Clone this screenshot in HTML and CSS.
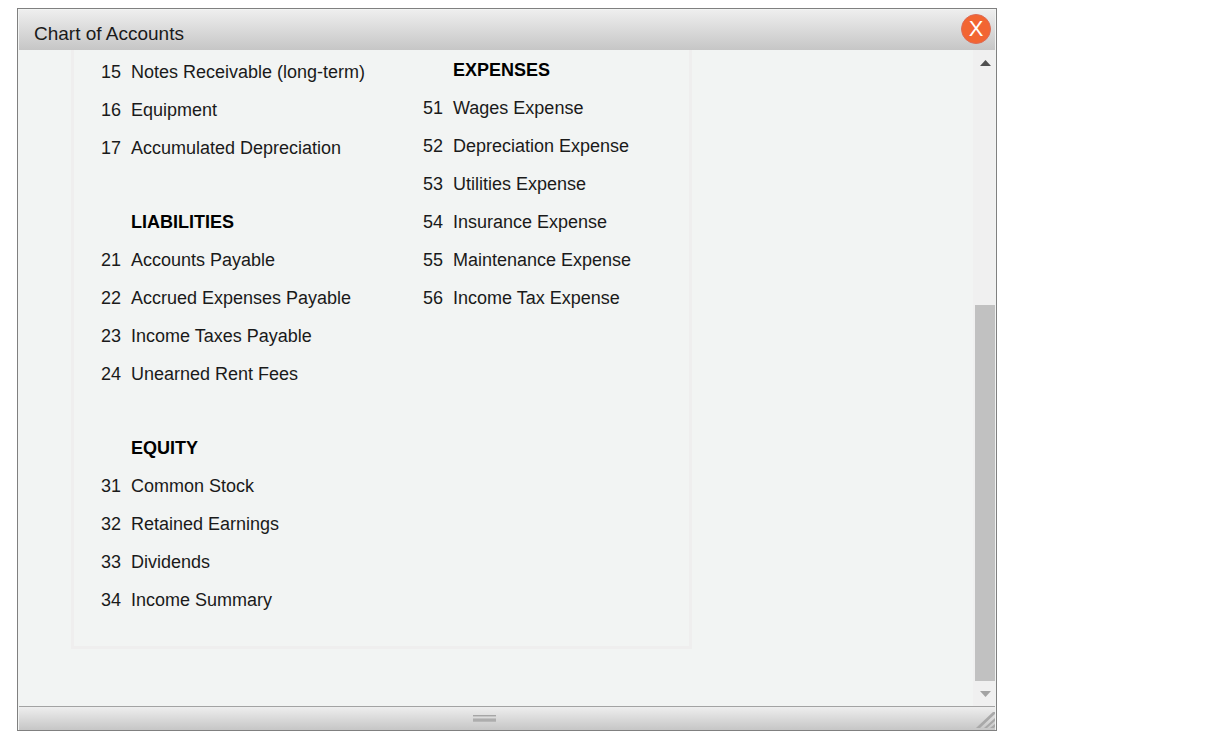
FILE: index.html
```html
<!DOCTYPE html>
<html lang="en">
<head>
    <meta charset="UTF-8">
    <meta name="viewport" content="width=device-width, initial-scale=1.0">
    <title>Chart of Accounts</title>
    <link rel="stylesheet" href="styles.css">
</head>
<body>
    <div class="window">
        <header class="title-bar">
            <h1>Chart of Accounts</h1>
            <button class="close" type="button">X</button>
        </header>

        <div class="window-body">
            <main class="content">
                <div class="panel">
                    <div class="column column-left">
                        <table>
                            <tr><td class="num">15</td><td>Notes Receivable (long-term)</td></tr>
                            <tr><td class="num">16</td><td>Equipment</td></tr>
                            <tr><td class="num">17</td><td>Accumulated Depreciation</td></tr>
                        </table>
                        <table>
                            <tr><td class="num"></td><th>LIABILITIES</th></tr>
                            <tr><td class="num">21</td><td>Accounts Payable</td></tr>
                            <tr><td class="num">22</td><td>Accrued Expenses Payable</td></tr>
                            <tr><td class="num">23</td><td>Income Taxes Payable</td></tr>
                            <tr><td class="num">24</td><td>Unearned Rent Fees</td></tr>
                        </table>
                        <table>
                            <tr><td class="num"></td><th>EQUITY</th></tr>
                            <tr><td class="num">31</td><td>Common Stock</td></tr>
                            <tr><td class="num">32</td><td>Retained Earnings</td></tr>
                            <tr><td class="num">33</td><td>Dividends</td></tr>
                            <tr><td class="num">34</td><td>Income Summary</td></tr>
                        </table>
                    </div>
                    <div class="column">
                        <table>
                            <tr><td class="num"></td><th>EXPENSES</th></tr>
                            <tr><td class="num">51</td><td>Wages Expense</td></tr>
                            <tr><td class="num">52</td><td>Depreciation Expense</td></tr>
                            <tr><td class="num">53</td><td>Utilities Expense</td></tr>
                            <tr><td class="num">54</td><td>Insurance Expense</td></tr>
                            <tr><td class="num">55</td><td>Maintenance Expense</td></tr>
                            <tr><td class="num">56</td><td>Income Tax Expense</td></tr>
                        </table>
                    </div>
                </div>
            </main>

            <div class="scrollbar">
                <button class="arrow arrow-up" type="button" aria-label="Scroll up">
                    <svg width="11" height="6" viewBox="0 0 11 6"><path d="M0 6 L5.5 0 L11 6 Z"/></svg>
                </button>
                <div class="track">
                    <div class="thumb"></div>
                </div>
                <button class="arrow arrow-down" type="button" aria-label="Scroll down">
                    <svg width="11" height="6" viewBox="0 0 11 6"><path d="M0 0 L5.5 6 L11 0 Z"/></svg>
                </button>
            </div>
        </div>

        <footer class="status-bar">
            <svg class="grip" width="24" height="8" viewBox="0 0 24 8">
                <rect width="23" height="1" fill="#a6a6a6"/>
                <rect y="1" width="23" height="1" fill="#c6c6c6"/>
                <rect y="3" width="23" height="1" fill="#c2c2c2"/>
                <rect y="4" width="23" height="2" fill="#adadad"/>
                <rect y="6" width="23" height="1" fill="#b8b8b8"/>
            </svg>
            <svg class="resize" width="19" height="19" viewBox="0 0 19 19">
                <path d="M0 17 L17 1 L19 1 L19 3 L4 17 Z M8 17 L19 7 L19 10 L11 17 Z M14 17 L19 13 L19 16 L18 17 Z" fill="#a9a9a9"/>
            </svg>
        </footer>
    </div>
</body>
</html>
```

FILE: styles.css
```css
* {
    box-sizing: border-box;
}
body {
    margin: 8px 17px;
    background: white;
    color: #1a1a1a;
    font-family: "Liberation Sans", Arial, sans-serif;
    font-size: 18px;
}
.window {
    display: flex;
    flex-direction: column;
    max-width: 980px;
    height: calc(100vh - 26px);
    padding: 1px 1px 0;
    border: 1px solid #808080;
    background: #f2f4f3;
}
.title-bar {
    display: flex;
    align-items: center;
    justify-content: space-between;
    flex: none;
    height: 40px;
    padding: 0 4px 2px 15px;
    background: linear-gradient(#eeeeee, #c6c6c6);
}
.title-bar h1 {
    margin: 0;
    padding-top: 10px;
    font-size: 19px;
    font-weight: normal;
    line-height: 22px;
}
.close {
    width: 30px;
    height: 30px;
    padding: 0;
    border: 1px solid #dd6a55;
    border-radius: 50%;
    background: #f26532;
    color: white;
    font-family: inherit;
    font-size: 22px;
    line-height: 26px;
    cursor: pointer;
}
.window-body {
    display: flex;
    flex: 1;
    min-height: 0;
}
.content {
    flex: 1;
    padding: 0 20px 0 52px;
    overflow: hidden;
}
.panel {
    display: flex;
    max-width: 621px;
    padding: 1px 27px 27px;
    border: 3px solid #efeeee;
    border-top: none;
}
.column {
    flex: 1;
}
.column-left {
    flex: none;
    width: 322px;
    padding-top: 2px;
}
table {
    border-collapse: collapse;
}
table + table {
    margin-top: 36px;
}
td, th {
    height: 38px;
    padding: 0;
    line-height: 20px;
    text-align: left;
    white-space: nowrap;
}
th {
    color: black;
}
.num {
    width: 30px;
}
.scrollbar {
    display: flex;
    flex-direction: column;
    flex: none;
    width: 22px;
    padding-left: 2px;
    background: #f0f0f0;
}
.arrow {
    display: flex;
    align-items: center;
    justify-content: center;
    height: 25px;
    padding: 0;
    border: none;
    background: none;
}
.arrow-up {
    fill: #505050;
}
.arrow-down {
    fill: #a3a3a3;
}
.track {
    display: flex;
    flex: 1;
    align-items: flex-end;
}
.thumb {
    width: 100%;
    height: 62%;
    background: #c1c1c1;
}
.status-bar {
    display: flex;
    align-items: center;
    justify-content: center;
    flex: none;
    position: relative;
    height: 24px;
    padding-right: 44px;
    border-top: 1px solid #a3a3a3;
    background: linear-gradient(#eeeeee, #c6c6c6);
}
.resize {
    position: absolute;
    right: 0;
    bottom: 0;
    cursor: se-resize;
}
```
